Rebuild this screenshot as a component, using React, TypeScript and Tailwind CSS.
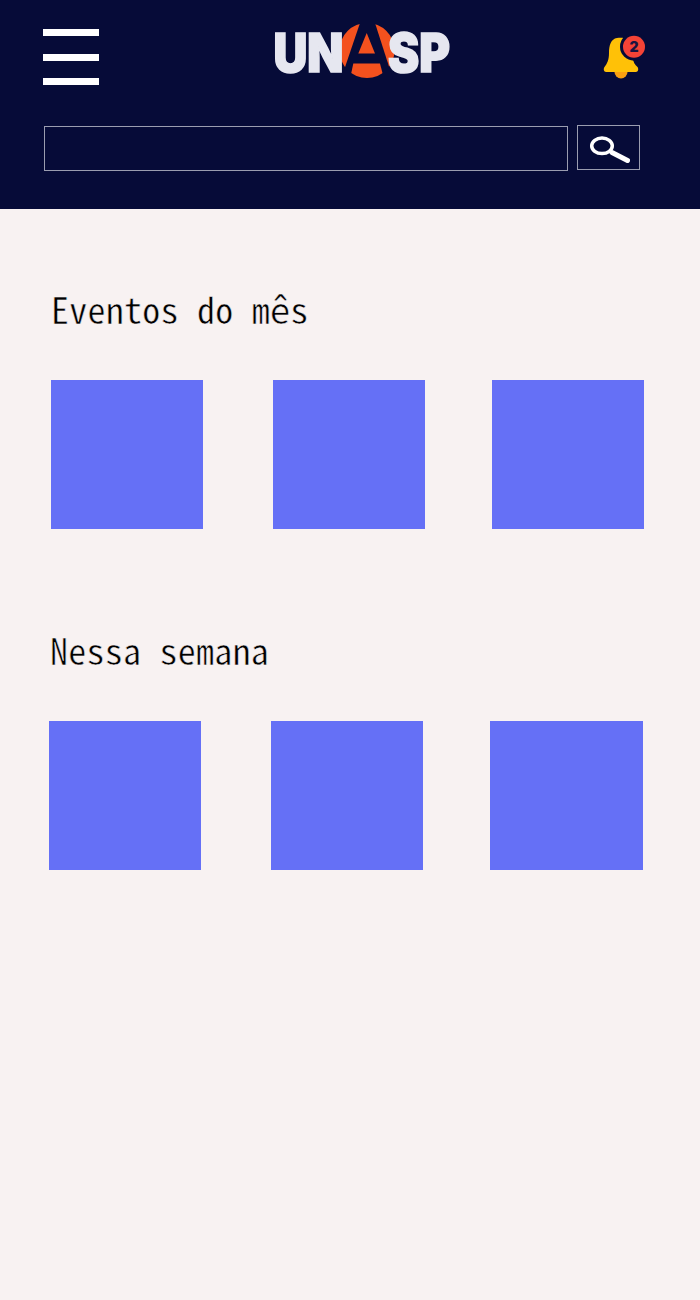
import React from 'react'

const MONO = "font-['Noto_Sans_Mono_CJK_SC','Noto_Sans_CJK_SC',monospace]"

// logo: circle + cut out A, the letters stay real text
function Logo() {
  return (
    <svg width="176" height="56" viewBox="0 0 176 56" className="block overflow-visible">
      <defs>
        <clipPath id="logo-circle">
          <circle cx="93" cy="27.500" r="27.500" />
        </clipPath>
      </defs>
      <circle cx="93" cy="27.500" r="27.500" fill="#f4511e" />
      <polygon points="86,0 101,0 119,56 67,56" fill="#060b38" />
      <polygon points="92.700,10 101,30.500 84.300,30.500" fill="#f4511e" />
      <polygon points="79.300,40.500 106,40.500 110,56 76,56" fill="#f4511e" clipPath="url(#logo-circle)" />
      <text x="-0.500" y="49" textLength="70" lengthAdjust="spacingAndGlyphs" fontFamily="Inter, sans-serif" fontWeight="900" fontSize="53" fill="#e6e7f0" stroke="#e6e7f0" strokeWidth="1.600">UN</text>
      <text x="114" y="49" textLength="62" lengthAdjust="spacingAndGlyphs" fontFamily="Inter, sans-serif" fontWeight="900" fontSize="53" fill="#e6e7f0" stroke="#e6e7f0" strokeWidth="1.600">SP</text>
    </svg>
  )
}

function Bell() {
  return (
    <svg width="48" height="48" viewBox="0 0 48 48" className="block">
      <circle cx="21" cy="38" r="6.500" fill="#f9a011" />
      <path d="M17 4C11 5 9 11 9 19C9 26 7 30 4.500 33C3 35 4 38 6 38H36C38 38 39 35 37.500 33C35 31 33 28 33 24V10C30 5 24 3 17 4Z" fill="#ffc107" />
      <circle cx="34" cy="12.700" r="14" fill="#060b38" />
      <circle cx="34" cy="12.700" r="11" fill="#f44336" />
      <text x="34" y="17.700" textAnchor="middle" fontFamily="Inter, sans-serif" fontWeight="900" fontSize="14" fill="#1a1440">2</text>
    </svg>
  )
}

function SearchIcon() {
  return (
    <svg width="43" height="30" viewBox="0 0 43 30" fill="none" stroke="#fff">
      <ellipse cx="15" cy="12.800" rx="10.300" ry="7.800" strokeWidth="3.500" />
      <path d="M25 19.500L40.500 27.500" strokeWidth="5" strokeLinecap="round" />
    </svg>
  )
}

function Section({ title, className, titleClass, lastWidth }: { title: string; className: string; titleClass: string; lastWidth: string }) {
  return (
    <section className={className}>
      <h2 className={`${MONO} h-[36px] text-[36px] font-normal leading-[36px] tracking-[0.25px] text-black [-webkit-text-stroke:0.5px_#f8f2f2] ${titleClass}`}>{title}</h2>
      <div className="mt-[54px] flex">
        <div className="h-[149px] w-[152px] bg-[#6570f6]" />
        <div className="ml-[70px] h-[149px] w-[152px] bg-[#6570f6]" />
        <div className={`ml-[67px] h-[149px] bg-[#6570f6] ${lastWidth}`} />
      </div>
    </section>
  )
}

export default function App() {
  return (
    <div className="min-h-[1300px] w-[700px] bg-[#f8f2f2]">
      <header className="h-[209px] bg-[#060b38]">
        <div className="flex h-[125px] items-start">
          <button type="button" className="ml-[43px] mt-[29px] flex h-[56px] w-[56px] flex-col justify-between">
            <span className="h-[7px] w-full bg-white" />
            <span className="h-[7px] w-full bg-white" />
            <span className="h-[7px] w-full bg-white" />
          </button>
          <div className="ml-[175px] mt-[23px]"><Logo /></div>
          <div className="ml-[150px] mt-[34px]"><Bell /></div>
        </div>
        <div className="flex items-start">
          <input className="ml-[44px] mt-px h-[45px] w-[524px] border border-[#9a9db0] bg-transparent" />
          <button type="button" className="ml-[9px] flex h-[45px] w-[63px] items-center justify-center border border-[#9a9db0]">
            <SearchIcon />
          </button>
        </div>
      </header>
      <main>
        <Section title="Eventos do mês" className="pl-[51px] pt-[81px]" titleClass="" lastWidth="w-[152px]" />
        <Section title="Nessa semana" className="pl-[49px] pt-[102px]" titleClass="pl-px" lastWidth="w-[153px]" />
      </main>
    </div>
  )
}
